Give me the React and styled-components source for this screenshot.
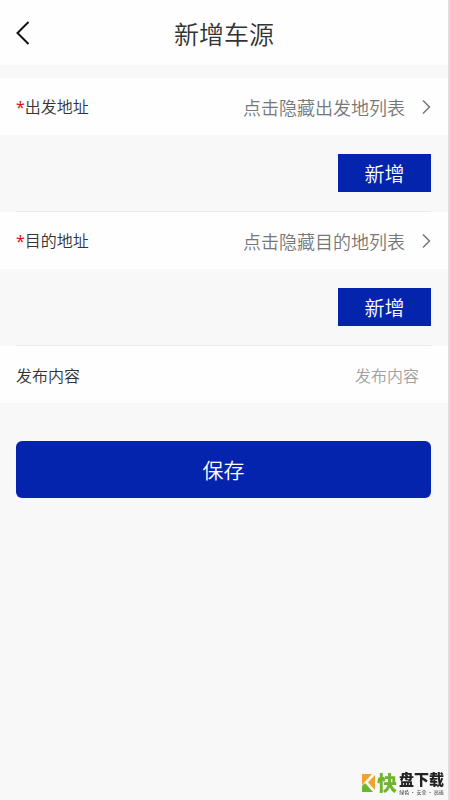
import React, { useState } from "react";
import styled, { createGlobalStyle } from "styled-components";

const GlobalStyle = createGlobalStyle`
  * {
    box-sizing: border-box;
  }
  body {
    margin: 0;
    background: #f8f8f8;
  }
  body, button, input {
    font-family: "Noto Sans CJK SC", sans-serif;
    font-weight: 350;
  }
  button {
    border: 0;
    padding: 0;
    cursor: pointer;
  }
`;

const Page = styled.div`
  min-height: 100vh;
  border-right: 2px solid #dedede;
`;

const Header = styled.header`
  display: grid;
  grid-template-columns: 1fr auto 1fr;
  align-items: center;
  height: 65px;
  padding: 0 16px;
  margin-bottom: 13px;
  background: #fefefe;
`;

const BackButton = styled.button`
  display: flex;
  justify-self: start;
  background: none;
`;

const Title = styled.h1`
  margin: 0;
  font-size: 25px;
  font-weight: 350;
  line-height: 36px;
  color: #333;
`;

const Row = styled.div`
  display: flex;
  align-items: center;
  justify-content: space-between;
  height: 57px;
  padding: 0 17px 0 16px;
  background: #fefefe;
`;

const Label = styled.label`
  flex: none;
  font-size: 16px;
  line-height: 24px;
  color: #333;
`;

const Required = styled.span`
  font-family: "Noto Sans", sans-serif;
  font-weight: 400;
  color: #d80f1c;
`;

const Toggle = styled.button`
  display: flex;
  align-items: center;
  gap: 17px;
  background: none;
  font-size: 18px;
  line-height: 24px;
  color: #777;
`;

const TextInput = styled.input`
  flex: 1;
  min-width: 0;
  padding: 0 12px 0 0;
  border: 0;
  outline: 0;
  background: none;
  font-size: 16px;
  line-height: 24px;
  text-align: right;
  color: #333;
  &::placeholder {
    color: #a0a0a0;
    opacity: 1;
  }
`;

const Panel = styled.div`
  display: flex;
  justify-content: flex-end;
  margin: 0 17px 0 16px;
  padding: 19px 0;
  border-bottom: 1px solid #ebebeb;
`;

const AddButton = styled.button`
  width: 93px;
  height: 38px;
  background: #0424ae;
  font-size: 20px;
  line-height: 40px;
  color: #fff;
`;

const Actions = styled.div`
  display: flex;
  padding: 38px 17px 0 16px;
`;

const SaveButton = styled.button`
  flex: 1;
  height: 57px;
  border-radius: 6px;
  background: #0424ae;
  font-size: 21px;
  line-height: 57px;
  color: #fff;
`;

const Watermark = styled.div`
  position: fixed;
  right: 6px;
  bottom: 5px;
  display: flex;
  align-items: center;
  gap: 2px;
`;

const BrandMark = styled.span`
  font-size: 20px;
  font-weight: 900;
  line-height: 24px;
  color: #6fb52c;
`;

const BrandText = styled.div`
  display: flex;
  flex-direction: column;
  align-items: center;
`;

const BrandName = styled.span`
  font-size: 15px;
  font-weight: 900;
  line-height: 18px;
  color: #222;
`;

const Slogan = styled.span`
  font-size: 5px;
  font-weight: 400;
  line-height: 7px;
  color: #333;
`;

const BackIcon = () => (
  <svg width="14" height="24" viewBox="0 0 14 24" fill="none" aria-hidden="true">
    <path d="M12.5 1L1.5 12L12.5 23" stroke="#111" strokeWidth="2" />
  </svg>
);

const ArrowIcon = () => (
  <svg width="9" height="16" viewBox="0 0 9 16" fill="none" aria-hidden="true">
    <path d="M1 1.5L7.5 8L1 14.5" stroke="#777" strokeWidth="1.5" />
  </svg>
);

const BrandIcon = () => (
  <svg width="13" height="18" viewBox="0 0 13 18" aria-hidden="true">
    <path d="M0 0H10L0 11Z" fill="#f3a32b" />
    <path d="M0 18V12L3 9L11 18Z" fill="#6fb52c" />
    <path d="M13 1V16L6 8.5Z" fill="#f3a32b" />
  </svg>
);

const AddressField = ({ id, label, place }) => {
  const [open, setOpen] = useState(true);
  return (
    <>
      <Row>
        <Label htmlFor={id}>
          <Required>*</Required>
          {label}
        </Label>
        <Toggle id={id} type="button" onClick={() => setOpen(!open)}>
          {open ? "点击隐藏" : "点击显示"}
          {place}列表
          <ArrowIcon />
        </Toggle>
      </Row>
      {open && (
        <Panel>
          <AddButton type="button">新增</AddButton>
        </Panel>
      )}
    </>
  );
};

const App = () => {
  return (
    <Page>
      <GlobalStyle />
      <Header>
        <BackButton type="button" aria-label="返回">
          <BackIcon />
        </BackButton>
        <Title>新增车源</Title>
      </Header>

      <form onSubmit={(e) => e.preventDefault()}>
        <AddressField id="from" label="出发地址" place="出发地" />
        <AddressField id="to" label="目的地址" place="目的地" />
        <Row>
          <Label htmlFor="content">发布内容</Label>
          <TextInput id="content" type="text" placeholder="发布内容" />
        </Row>
        <Actions>
          <SaveButton type="submit">保存</SaveButton>
        </Actions>
      </form>

      <Watermark>
        <BrandIcon />
        <BrandMark>快</BrandMark>
        <BrandText>
          <BrandName>盘下载</BrandName>
          <Slogan>绿色 · 安全 · 高速</Slogan>
        </BrandText>
      </Watermark>
    </Page>
  );
};

export default App;
